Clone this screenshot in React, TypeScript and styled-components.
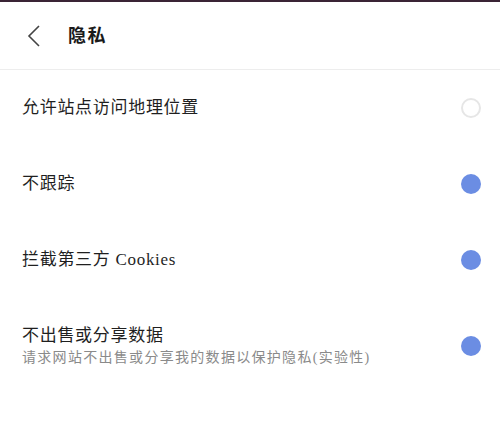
import styled, { createGlobalStyle } from "styled-components";

const GlobalStyle = createGlobalStyle`
  html, body {
    margin: 0;
    padding: 0;
    background: #ffffff;
  }
  body {
    font-family: "Liberation Serif", "Noto Sans CJK SC", serif;
    color: #1f1f1f;
  }
`;

const Page = styled.div`
  width: 500px;
  min-height: 422px;
  background: #ffffff;
  border-top: 2px solid #3a2435;
`;

const Header = styled.div`
  height: 68px;
  display: flex;
  align-items: center;
  padding-left: 26px;
  border-bottom: 1px solid #ededed;
  box-sizing: border-box;
`;

const BackButton = styled.button`
  width: 16px;
  height: 24px;
  padding: 0;
  border: none;
  background: none;
  display: flex;
  align-items: center;
  justify-content: center;
  cursor: pointer;
  margin-top: 1px;
`;

const Title = styled.h1`
  margin: 0 0 0 26px;
  font-size: 18px;
  font-weight: 700;
  letter-spacing: 1.5px;
  color: #1a1a1a;
  line-height: 24px;
`;

const List = styled.div`
  display: flex;
  flex-direction: column;
`;

const Row = styled.div`
  display: flex;
  align-items: center;
  justify-content: space-between;
  padding: 26px 19px 26px 22px;
`;

const Texts = styled.div`
  display: flex;
  flex-direction: column;
`;

const Label = styled.div`
  font-size: 17px;
  letter-spacing: 0.7px;
  line-height: 24px;
  color: #1f1f1f;
`;

const Hint = styled.div`
  font-size: 14px;
  letter-spacing: 1.3px;
  line-height: 20px;
  color: #8a8a8a;
`;

const Radio = styled.span<{ $on: boolean }>`
  width: 20px;
  height: 20px;
  border-radius: 50%;
  box-sizing: border-box;
  flex-shrink: 0;
  background: ${(p) => (p.$on ? "#6b8de3" : "#ffffff")};
  border: ${(p) => (p.$on ? "none" : "2px solid #e6e6e6")};
`;

const items = [
  { label: "允许站点访问地理位置", on: false },
  { label: "不跟踪", on: true },
  { label: "拦截第三方 Cookies", on: true },
  {
    label: "不出售或分享数据",
    hint: "请求网站不出售或分享我的数据以保护隐私(实验性)",
    on: true,
  },
];

export default function App() {
  return (
    <>
      <GlobalStyle />
      <Page>
        <Header>
          <BackButton aria-label="back">
            <svg width="14" height="22" viewBox="0 0 14 22">
              <polyline
                points="12,1 2,11 12,21"
                fill="none"
                stroke="#444"
                strokeWidth="1.6"
                strokeLinejoin="miter"
              />
            </svg>
          </BackButton>
          <Title>隐私</Title>
        </Header>
        <List>
          {items.map((it) => (
            <Row key={it.label}>
              <Texts>
                <Label>{it.label}</Label>
                {it.hint && <Hint>{it.hint}</Hint>}
              </Texts>
              <Radio $on={it.on} />
            </Row>
          ))}
        </List>
      </Page>
    </>
  );
}
